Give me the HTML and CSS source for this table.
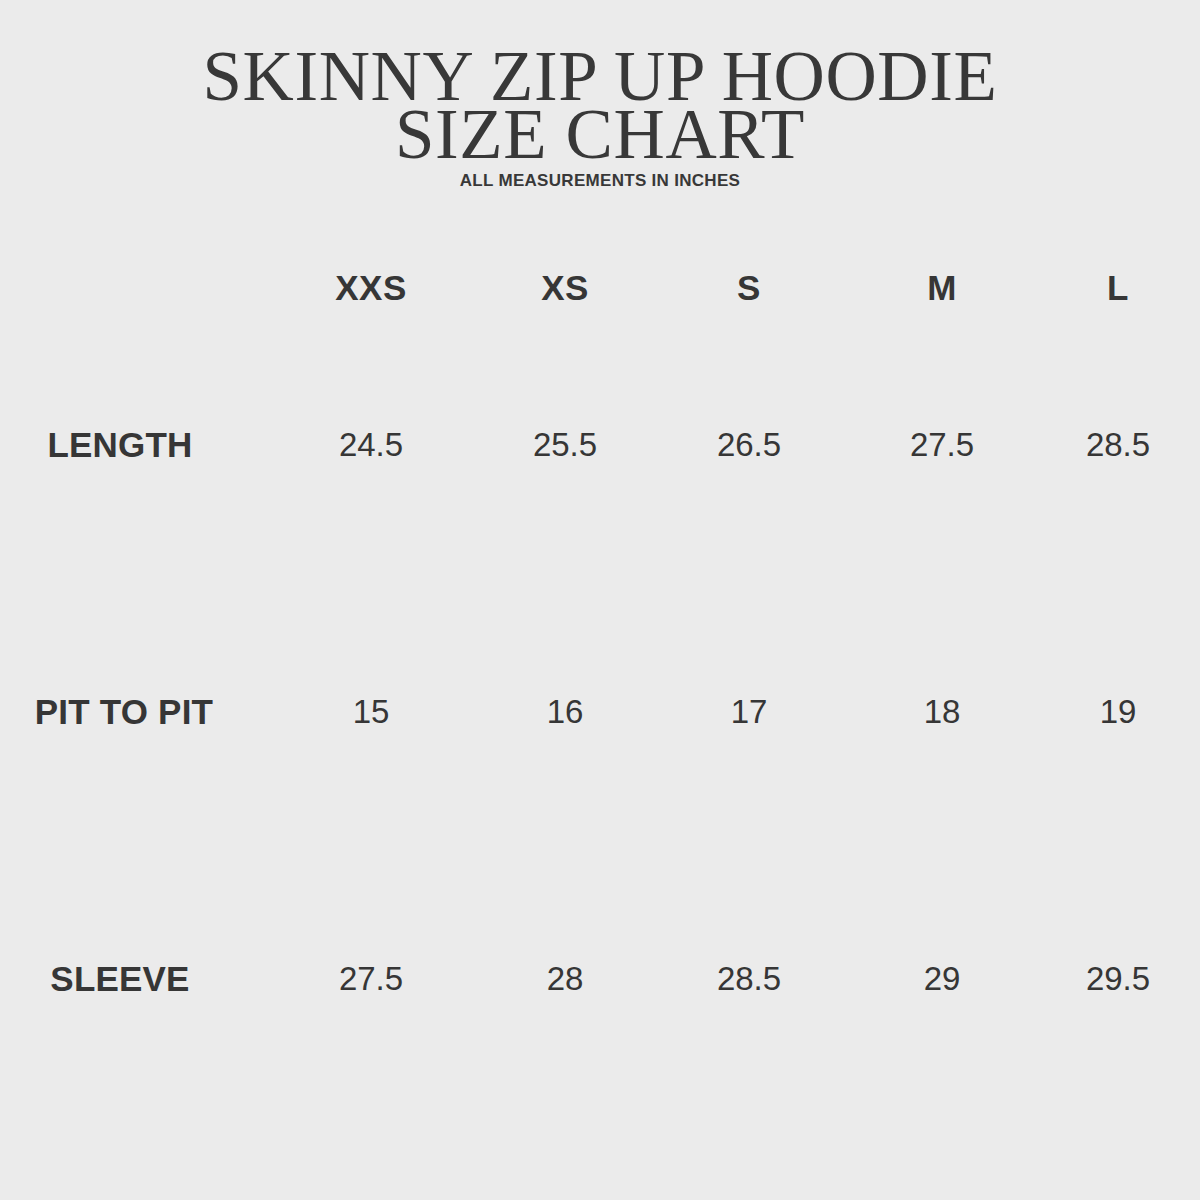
FILE: index.html
```html
<!DOCTYPE html>
<html lang="en">
<head>
<meta charset="utf-8">
<title>Skinny Zip Up Hoodie Size Chart</title>
<link rel="stylesheet" href="styles.css">
</head>
<body>
<div class="page">
  <header class="head">
    <h1 class="title">SKINNY ZIP UP HOODIE<br>SIZE CHART</h1>
    <p class="subtitle">ALL MEASUREMENTS IN INCHES</p>
  </header>
  <div class="chart">
    <div class="cell head-cell"></div>
    <div class="cell head-cell">XXS</div>
    <div class="cell head-cell">XS</div>
    <div class="cell head-cell">S</div>
    <div class="cell head-cell">M</div>
    <div class="cell head-cell">L</div>

    <div class="cell label">LENGTH</div>
    <div class="cell val">24.5</div>
    <div class="cell val">25.5</div>
    <div class="cell val">26.5</div>
    <div class="cell val">27.5</div>
    <div class="cell val">28.5</div>

    <div class="cell label label-pit">PIT TO PIT</div>
    <div class="cell val">15</div>
    <div class="cell val">16</div>
    <div class="cell val">17</div>
    <div class="cell val">18</div>
    <div class="cell val">19</div>

    <div class="cell label">SLEEVE</div>
    <div class="cell val">27.5</div>
    <div class="cell val">28</div>
    <div class="cell val">28.5</div>
    <div class="cell val">29</div>
    <div class="cell val">29.5</div>
  </div>
</div>
</body>
</html>
```
FILE: styles.css
```css
html, body {
  margin: 0;
  padding: 0;
  background: #ebebeb;
}
body {
  width: 1200px;
  height: 1200px;
  overflow: hidden;
  color: #363636;
  font-family: "Liberation Sans", Arial, sans-serif;
}
.page {
  display: flex;
  flex-direction: column;
  padding-top: 47px;
}
.head {
  display: flex;
  flex-direction: column;
  align-items: center;
}
.title {
  margin: 0;
  font-family: "Liberation Serif", "Times New Roman", serif;
  font-weight: 400;
  font-size: 71px;
  line-height: 58px;
  letter-spacing: 0.6px;
  text-align: center;
  color: #383838;
}
.subtitle {
  margin: 9px 0 0;
  font-weight: 700;
  font-size: 17px;
  line-height: 17px;
  letter-spacing: 0.3px;
  color: #383838;
}
.chart {
  margin-top: 74px;
  width: 1200px;
  overflow: hidden;
  display: grid;
  grid-template-columns: 240px 262px 126px 242px 144px 208px;
  grid-template-rows: 48px 267px 267px 267px;
}
.cell {
  display: flex;
  align-items: center;
  justify-content: center;
  white-space: nowrap;
  line-height: 1;
}
.head-cell {
  font-weight: 700;
  font-size: 35px;
  letter-spacing: 0.5px;
}
.label {
  font-weight: 700;
  font-size: 35px;
  letter-spacing: 0.2px;
}
.label-pit {
  padding-left: 8px;
}
.val {
  font-weight: 400;
  font-size: 33px;
  letter-spacing: 0;
}
```
